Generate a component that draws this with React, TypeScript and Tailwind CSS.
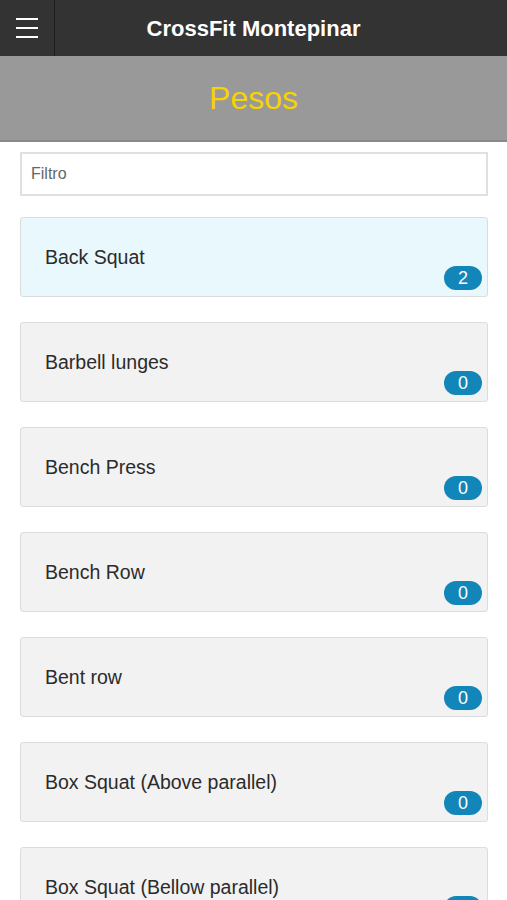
import React from "react";

const exercises = [
  { name: "Back Squat", count: 2, active: true },
  { name: "Barbell lunges", count: 0 },
  { name: "Bench Press", count: 0 },
  { name: "Bench Row", count: 0 },
  { name: "Bent row", count: 0 },
  { name: "Box Squat (Above parallel)", count: 0 },
  { name: "Box Squat (Bellow parallel)", count: 0 },
];

const App = () => {
  return (
    <div className="w-[507px] h-[900px] overflow-hidden bg-white font-['Liberation_Sans',Arial,sans-serif]">
      {/* header */}
      <div className="h-[56px] bg-[#333333] flex items-stretch">
        <div className="w-[55px] border-r border-[#1f1f1f] flex flex-col justify-center items-center gap-[7px]">
          <span className="block w-[22px] h-[2px] bg-white" />
          <span className="block w-[22px] h-[2px] bg-white" />
          <span className="block w-[22px] h-[2px] bg-white" />
        </div>
        <div className="flex-1 flex items-center justify-center pr-[55px]">
          <h1 className="text-white font-bold text-[22px]">CrossFit Montepinar</h1>
        </div>
      </div>

      {/* title band */}
      <div className="h-[86px] bg-[#999999] border-b-2 border-[#8a8a8a] flex items-center justify-center">
        <h2 className="text-[#f7d300] text-[32px] leading-none">Pesos</h2>
      </div>

      <div className="pl-[20px] pr-[19px] pt-[10px] flex flex-col gap-[25px]">
        <div className="h-[44px] border-2 border-[#e0e0e0] flex items-center px-[9px]">
          <span className="text-[16px] text-[#666666]">Filtro</span>
        </div>

        <div className="flex flex-col gap-[25px] -mt-[4px]">
          {exercises.map((ex) => (
            <div
              key={ex.name}
              className={`relative h-[80px] rounded-[3px] border border-[#dcdcdc] flex items-center pl-[24px] pt-[2px] ${
                ex.active ? "bg-[#e9f8fd]" : "bg-[#f2f2f2]"
              }`}
            >
              <span className="text-[19.5px] text-[#2b2b2b]">{ex.name}</span>
              <span className="absolute right-[5px] bottom-[6px] w-[38px] h-[24px] rounded-full bg-[#1285b9] text-white text-[18px] leading-none flex items-center justify-center">
                {ex.count}
              </span>
            </div>
          ))}
        </div>
      </div>
    </div>
  );
};

export default App;
